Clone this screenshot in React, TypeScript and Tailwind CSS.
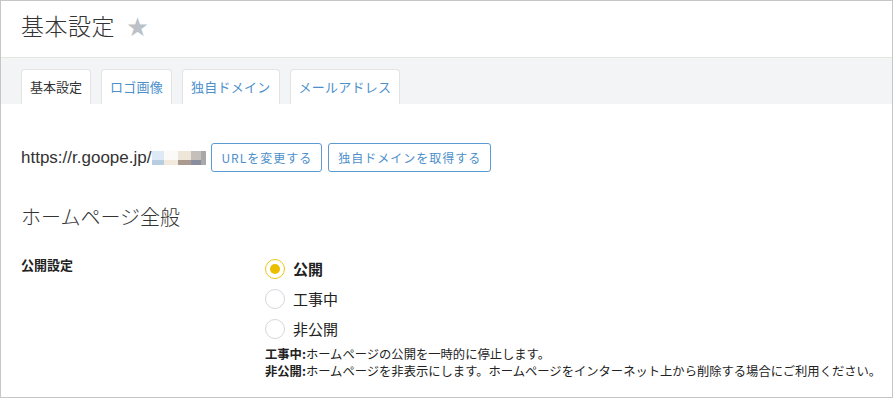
import React from "react";

const font = { fontFamily: '"Noto Sans CJK JP", "Liberation Sans", sans-serif' };

function Radio({ label, checked }: { label: string; checked?: boolean }) {
  return (
    <div className="flex items-center h-[30px]">
      <span
        className={
          checked
            ? "w-[20px] h-[20px] rounded-full border-[1.5px] border-[#f0c419] flex items-center justify-center bg-white"
            : "w-[20px] h-[20px] rounded-full border-[1.5px] border-[#d3d7dc] bg-white"
        }
      >
        {checked && <span className="w-[10px] h-[10px] rounded-full bg-[#ebbf00]" />}
      </span>
      <span
        className={
          checked
            ? "ml-[8px] text-[15px] font-bold text-[#222]"
            : "ml-[8px] text-[15px] text-[#222]"
        }
      >
        {label}
      </span>
    </div>
  );
}

export default function App() {
  const tabs = ["基本設定", "ロゴ画像", "独自ドメイン", "メールアドレス"];
  return (
    <div
      className="w-[893px] h-[398px] border border-[#c6c6c6] bg-white overflow-hidden text-[#333]"
      style={font}
    >
      <div className="h-[57px] flex items-center pl-[20px] pb-[8px] border-b border-[#e6e6e0]">
        <span className="text-[23px] leading-none text-[#333] font-light tracking-[0.5px]">基本設定</span>
        <span className="ml-[12px] text-[21px] leading-none text-[#bcc1c8]">★</span>
      </div>
      <div className="h-[46px] bg-[#f3f4f6] flex items-end pl-[20px] gap-[10px]">
        {tabs.map((t, i) => (
          <div
            key={t}
            className={
              i === 0
                ? "h-[35px] px-[8px] flex items-center bg-white border border-b-0 border-[#e3e3e3] rounded-t-[4px] text-[13px] text-[#333]"
                : "h-[35px] px-[8px] flex items-center bg-white border border-b-0 border-[#e3e3e3] rounded-t-[4px] text-[13px] tracking-[0.25px] text-[#4d8fcb]"
            }
          >
            {t}
          </div>
        ))}
      </div>
      <div className="pl-[20px] pt-[39px]">
        <div className="flex items-center h-[29px]">
          <span className="text-[17px] text-[#333]" style={{ fontFamily: '"Liberation Sans", "Noto Sans CJK JP", sans-serif' }}>
            https://r.goope.jp/
          </span>
          <span className="flex flex-col h-[14px] ml-[1px]">
            <span className="flex h-[9px]">
              <span className="w-[12px] bg-[#dde9f4]" />
              <span className="w-[14px] bg-[#fbfaf8]" />
              <span className="w-[13px] bg-[#efe6da]" />
              <span className="w-[10px] bg-[#c4bfbb]" />
              <span className="w-[5px] bg-[#a8a8a8]" />
            </span>
            <span className="flex h-[5px]">
              <span className="w-[12px] bg-[#b7cde2]" />
              <span className="w-[14px] bg-[#f3eade]" />
              <span className="w-[13px] bg-[#aa9a90]" />
              <span className="w-[10px] bg-[#8a8d9e]" />
              <span className="w-[5px] bg-[#a8a8a8]" />
            </span>
          </span>
          <button className="ml-[5px] h-[29px] px-[9px] border border-[#5b9bd1] rounded-[3px] text-[12px] tracking-[1px] text-[#4d8fcb] bg-white">
            URLを変更する
          </button>
          <button className="ml-[6px] h-[29px] px-[9px] border border-[#5b9bd1] rounded-[3px] text-[12px] tracking-[1px] text-[#4d8fcb] bg-white">
            独自ドメインを取得する
          </button>
        </div>
        <div className="mt-[30px] text-[20px] leading-[30px] text-[#333] font-light">ホームページ全般</div>
        <div className="mt-[22px] flex">
          <div className="w-[244px] shrink-0 text-[13px] font-bold text-[#222] pt-[1px]">公開設定</div>
          <div className="flex flex-col">
            <Radio label="公開" checked />
            <Radio label="工事中" />
            <Radio label="非公開" />
            <div className="mt-[2px] text-[12.3px] leading-[17px] text-[#222] whitespace-nowrap">
              <div>
                <span className="font-bold">工事中:</span>ホームページの公開を一時的に停止します。
              </div>
              <div>
                <span className="font-bold">非公開:</span>ホームページを非表示にします。ホームページをインターネット上から削除する場合にご利用ください。
              </div>
            </div>
          </div>
        </div>
      </div>
    </div>
  );
}
